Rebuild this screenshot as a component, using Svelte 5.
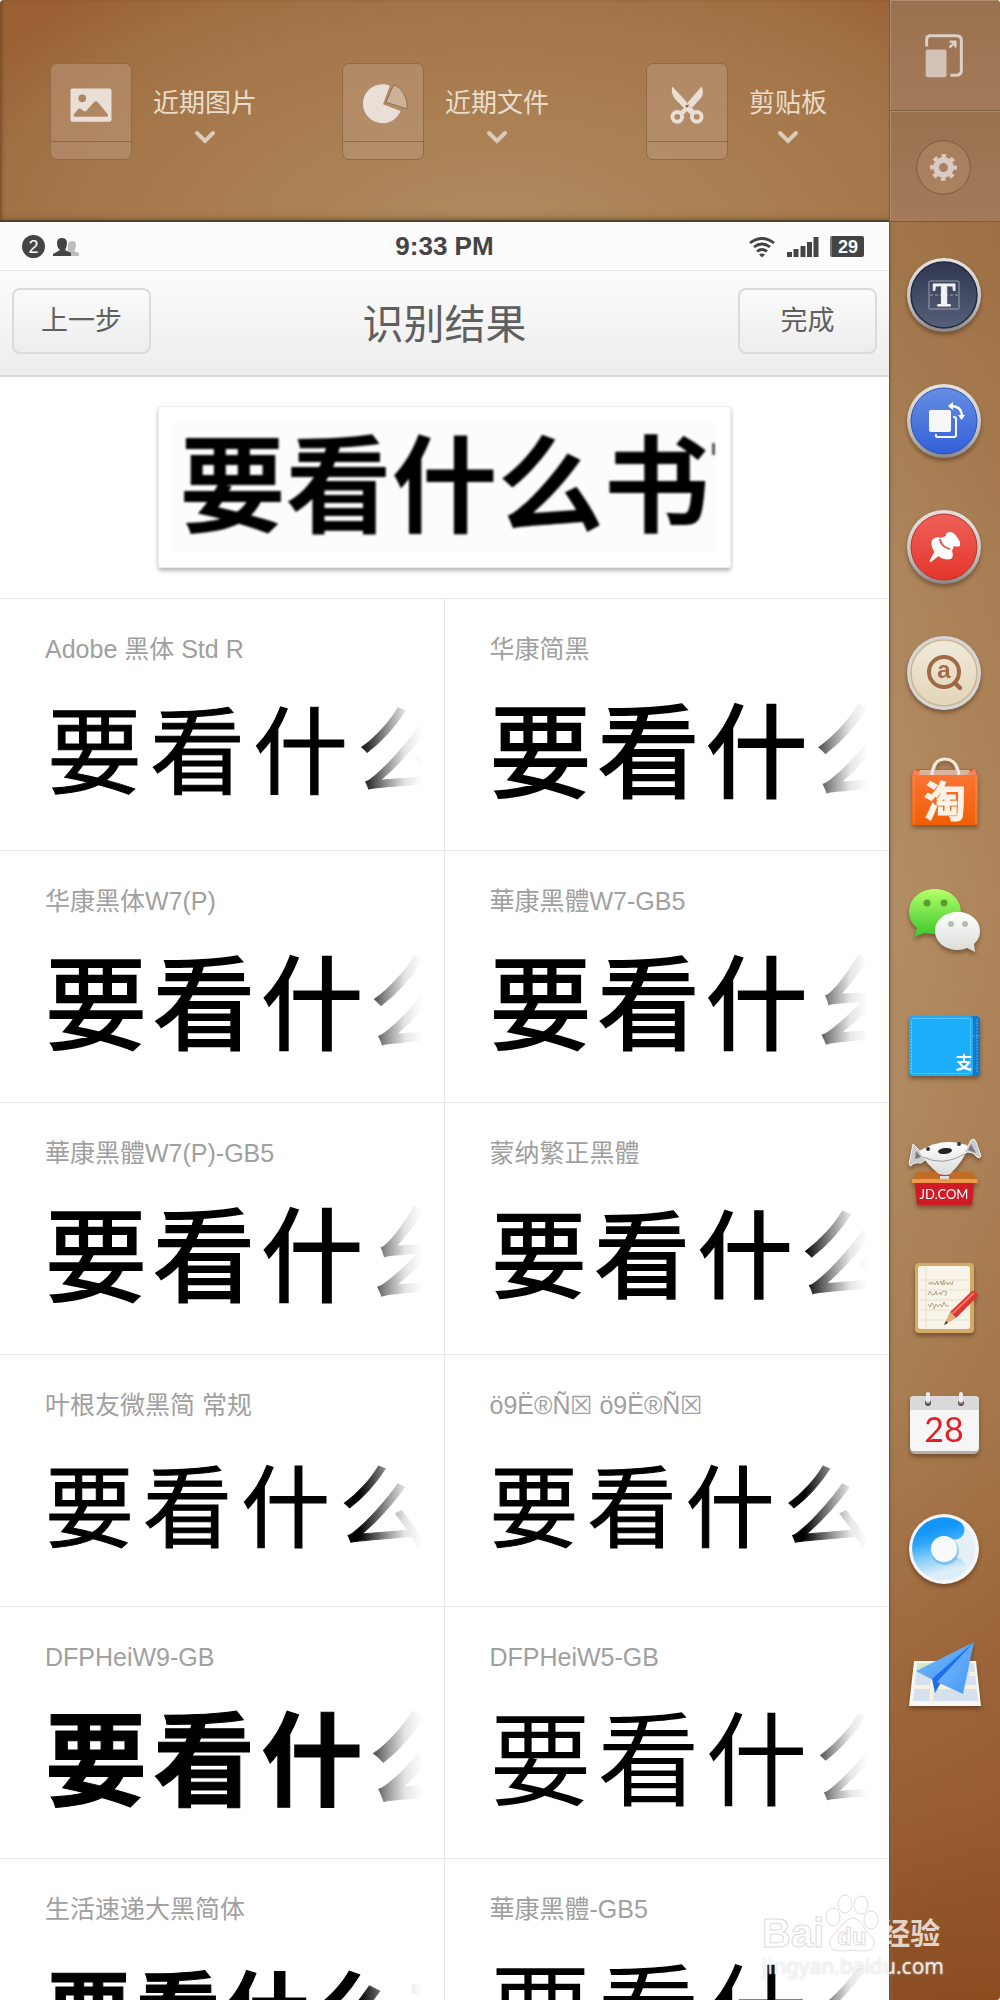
<script lang="ts">
	interface Sample {
		name: string;
		text: string;
		style: string;
	}

	const samples: Sample[] = [
		{ name: 'Adobe 黑体 Std R', text: '要看什么', style: 'medium w5' },
		{ name: '华康简黑', text: '要看什么', style: 'large w7' },
		{ name: '华康黑体W7(P)', text: '要看什么', style: 'large w7' },
		{ name: '華康黑體W7-GB5', text: '要看什幺', style: 'large w7' },
		{ name: '華康黑體W7(P)-GB5', text: '要看什幺', style: 'large w7' },
		{ name: '蒙纳繁正黑體', text: '要看什么', style: 'medium w7' },
		{ name: '叶根友微黑简 常规', text: '要看什么', style: 'small w5' },
		{ name: 'ö9Ë®Ñ☒ ö9Ë®Ñ☒', text: '要看什么', style: 'small w5' },
		{ name: 'DFPHeiW9-GB', text: '要看什么', style: 'large w9' },
		{ name: 'DFPHeiW5-GB', text: '要看什么', style: 'large w4' },
		{ name: '生活速递大黑简体', text: '要看什么书', style: 'tiny w9' },
		{ name: '華康黑體-GB5', text: '要看什么', style: 'large w4' }
	];

	let selected = $state('');
</script>

{#snippet chevron()}
	<svg class="chevron" viewBox="0 0 22 14" aria-hidden="true">
		<path d="M3 3l8 8 8-8" fill="none" stroke="#dccbba" stroke-width="4" stroke-linecap="round" />
	</svg>
{/snippet}

<div class="shell">
	<header class="tools">
		<button class="tool">
			<span class="card">
				<svg viewBox="0 0 82 97" aria-hidden="true">
					<path
						fill="#e9dfd6"
						fill-rule="evenodd"
						d="M22 25h38q2 0 2 2v30q0 2-2 2H22q-2 0-2-2V27q0-2 2-2zM32 31a4 4 0 1 0 0 8 4 4 0 0 0 0-8zM24 54h34q1 0 0-3L48 39q-2-2-4 0l-8 9q-2 1-4-1-3-3-5 0l-4 5z"
					/>
				</svg>
			</span>
			<span class="tool-label">近期图片{@render chevron()}</span>
		</button>
		<button class="tool">
			<span class="card">
				<svg viewBox="0 0 82 97" aria-hidden="true">
					<path fill="#e9dfd6" d="M41 41l7-19a20 20 0 1 0 11 26z" />
					<path fill="#cdb198" stroke="#8f6d4d" d="M44 39l8-18q14 6 14 25z" />
				</svg>
			</span>
			<span class="tool-label">近期文件{@render chevron()}</span>
		</button>
		<button class="tool">
			<span class="card">
				<svg viewBox="0 0 82 97" aria-hidden="true">
					<path fill="#e9dfd6" d="M26 23q-2 7 3 13l16 16 5-3zM56 23q3 7-1 12l-9 10-5-5zM40 43l-8 7 4 3 7-7z" />
					<circle cx="31" cy="54" r="5" fill="none" stroke="#e9dfd6" stroke-width="4" />
					<circle cx="51" cy="54" r="5" fill="none" stroke="#e9dfd6" stroke-width="4" />
					<circle cx="41" cy="43" r="1.5" fill="#8f6d4d" />
				</svg>
			</span>
			<span class="tool-label">剪贴板{@render chevron()}</span>
		</button>
	</header>

	<aside class="dock">
		<button class="corner" aria-label="缩放">
			<svg viewBox="0 0 111 110" aria-hidden="true">
				<path d="M37 46V39q0-4 4-4h26q5 0 5 5v30q0 5-5 5h-6" fill="none" stroke="#ddd0c6" stroke-width="3" />
				<rect x="36" y="49" width="21" height="28" rx="2" fill="#d3c3b7" />
				<path d="M60 41h6v6M66 41l-6 6" fill="none" stroke="#ddd0c6" stroke-width="2.4" />
			</svg>
		</button>
		<button class="corner" aria-label="设置">
			<svg viewBox="0 0 111 110" aria-hidden="true">
				<circle cx="54" cy="56" r="27" fill="#b58c6a" fill-opacity=".5" stroke="#7c5c41" />
				<circle cx="54" cy="56" r="7.5" fill="none" stroke="#d8cbc1" stroke-width="6" />
				<circle cx="54" cy="56" r="11.5" fill="none" stroke="#d8cbc1" stroke-width="4" stroke-dasharray="4.5 4.53" stroke-dashoffset="2.2" />
			</svg>
		</button>

		<nav class="apps" aria-label="应用">
			<svg class="defs" width="0" height="0" aria-hidden="true">
				<defs>
					<linearGradient id="rim" x2="0" y2="1"><stop stop-color="#e6e3df" /><stop offset=".6" stop-color="#c6c4c2" /><stop offset="1" stop-color="#8d8885" /></linearGradient>
					<linearGradient id="navy" x2="0" y2="1"><stop stop-color="#303851" /><stop offset="1" stop-color="#566078" /></linearGradient>
					<linearGradient id="blue" x2="0" y2="1"><stop stop-color="#668ee2" /><stop offset="1" stop-color="#3360d8" /></linearGradient>
					<linearGradient id="red" x2="0" y2="1"><stop stop-color="#ee6158" /><stop offset="1" stop-color="#e4352c" /></linearGradient>
					<linearGradient id="cream" x2="0" y2="1"><stop stop-color="#f0e9da" /><stop offset="1" stop-color="#e3d5b8" /></linearGradient>
					<linearGradient id="orange" x2="0" y2="1"><stop stop-color="#fb7434" /><stop offset="1" stop-color="#ef5f04" /></linearGradient>
					<linearGradient id="green" x2="0" y2="1"><stop stop-color="#b4ff6a" /><stop offset="1" stop-color="#3cc62c" /></linearGradient>
					<linearGradient id="silver" x2="0" y2="1"><stop stop-color="#ffffff" /><stop offset="1" stop-color="#d9dcd8" /></linearGradient>
					<linearGradient id="sky" x1=".6" y1="0" x2=".8" y2="1"><stop stop-color="#1296f8" /><stop offset=".25" stop-color="#2ea6fa" /><stop offset=".6" stop-color="#83cdf9" /><stop offset="1" stop-color="#dceef8" /></linearGradient>
					<linearGradient id="plane" y2="1"><stop stop-color="#79bdfb" /><stop offset="1" stop-color="#4596f5" /></linearGradient>
				</defs>
			</svg>

			<a class="app" href="#text" aria-label="文字">
				<svg viewBox="0 0 111 126">
					<circle cx="55" cy="63" r="37" fill="url(#rim)" />
					<circle cx="55" cy="63" r="33" fill="url(#navy)" stroke="#222a42" stroke-width="1.5" />
					<rect x="40" y="49" width="30" height="28" rx="1" fill="none" stroke="#9aa1b1" />
					<path d="M41 63h29" stroke="#9aa1b1" stroke-dasharray="3 2" />
					<text x="55" y="74" class="glyph-t">T</text>
				</svg>
			</a>
			<a class="app" href="#rotate" aria-label="旋转">
				<svg viewBox="0 0 111 126">
					<circle cx="55" cy="63" r="37" fill="url(#rim)" />
					<circle cx="55" cy="63" r="33" fill="url(#blue)" stroke="#2c50b8" />
					<rect x="40" y="52" width="22" height="22" rx="2" fill="#f7f7f7" />
					<path d="M47 76v2q0 1 2 1h16q2 0 2-2V61q0-2-2-2h-1" fill="none" stroke="#f4f6fc" stroke-width="2" />
					<path d="M62 48q10 0 11 9" fill="none" stroke="#fff" stroke-width="2.5" />
					<path d="M64 44v8l-5-4zM69 57h7l-3.5 5z" fill="#fff" />
				</svg>
			</a>
			<a class="app" href="#pin" aria-label="固定">
				<svg viewBox="0 0 111 126">
					<circle cx="55" cy="63" r="37" fill="url(#rim)" />
					<circle cx="55" cy="63" r="33" fill="url(#red)" stroke="#b8302b" />
					<path
						d="M58 49q5-3 10 4 4 5 3 9-3 1-6 0l-2 5q2 5-1 8-9 2-15-5-6-7-4-14 4-4 9-2l5-2q-1-2 1-3zM47 65l5 5-10 8q-2 0-1-2z"
						fill="#fff"
					/>
					<path d="M51 55q1 8 10 10" fill="none" stroke="#e9524a" stroke-width="2" />
				</svg>
			</a>
			<a class="app" href="#search" aria-label="搜索">
				<svg viewBox="0 0 111 126">
					<circle cx="55" cy="63" r="37" fill="#d7d5d5" />
					<circle cx="55" cy="63" r="33" fill="url(#cream)" stroke="#c9b88f" stroke-width="1.5" />
					<circle cx="55" cy="62" r="15" fill="none" stroke="#a06a46" stroke-width="4" />
					<path d="M66 73l5 5" stroke="#a06a46" stroke-width="4.5" stroke-linecap="round" />
					<text x="55" y="68" class="glyph-a">a</text>
				</svg>
			</a>
			<a class="app" href="#taobao" aria-label="淘宝">
				<svg viewBox="0 0 111 126">
					<path d="M25 33h61l2 7H23z" fill="#ea5420" />
					<path d="M31 34h49l3 5H28z" fill="#d9b59c" />
					<path d="M25 33l7 5-9 2zM86 33l-8 5 10 2z" fill="#fb8256" />
					<path d="M45 39q0-16 11-16t12 16" fill="none" stroke="#c9b5a3" stroke-width="2" />
					<rect x="23" y="39" width="66" height="50" fill="url(#orange)" />
					<path d="M43 39q1-16 13-16t14 16" fill="none" stroke="#f6e8d8" stroke-width="3" />
					<path d="M25 40v48M87 40v48" stroke="#ff9c66" stroke-opacity=".6" />
					<text x="56" y="81" class="glyph-tao">淘</text>
				</svg>
			</a>
			<a class="app" href="#wechat" aria-label="微信">
				<svg viewBox="0 0 111 126">
					<path d="M46 27c15 0 26 10 26 23S61 72 46 72q-6 0-10-1l-11 4 3-9q-8-6-8-16c0-13 11-23 26-23z" fill="url(#green)" />
					<circle cx="38" cy="41" r="3.5" fill="#579f28" />
					<circle cx="55" cy="41" r="3.5" fill="#579f28" />
					<path d="M69 50c12 0 22 8 22 19q0 8-6 13l1 8-8-4q-4 2-9 2c-13 0-23-8-23-19s10-19 23-19z" fill="url(#silver)" />
					<circle cx="62" cy="62" r="3" fill="#b5beb2" />
					<circle cx="76" cy="62" r="3" fill="#b5beb2" />
				</svg>
			</a>
			<a class="app" href="#alipay" aria-label="支付宝">
				<svg viewBox="0 0 111 126">
					<rect x="60" y="28" width="31" height="60" rx="4" fill="#1279c8" />
					<path d="M88 31v54M84 48h7" stroke="#57aee6" stroke-dasharray="2 1" fill="none" />
					<rect x="20" y="28" width="64" height="60" rx="3" fill="#1cadfb" />
					<rect x="22.5" y="30.5" width="59" height="55" rx="2" fill="none" stroke="#7bd0fb" stroke-dasharray="2 1" />
					<text x="75" y="81" class="glyph-zhi">支</text>
				</svg>
			</a>
			<a class="app" href="#jd" aria-label="京东">
				<svg viewBox="0 0 111 126">
					<path d="M28 58h55l6 9H23z" fill="#bf6c25" />
					<path d="M51 55h9v10h-9z" fill="#ddd" />
					<path d="M51 59h9v3h-9z" fill="#d8333a" />
					<path d="M30 37Q55 22 80 32q-6 16-19 28-4 2-11 0Q37 50 30 37z" fill="url(#silver)" />
					<path d="M30 36l6 10-4 3q-8-1-10 3-3 0-1-7l3-15zM79 32l3-6q4-2 5 2l5 14q-1 3-4 1-5-7-13-4z" fill="#c9cacb" stroke="#f2f2f2" />
					<path d="M27 37l5 6-6 2zM82 30l5 9-8-3z" fill="#777b7e" />
					<ellipse cx="56" cy="37" rx="7" ry="3" fill="#222" transform="rotate(-6 56 37)" />
					<circle cx="39" cy="35" r="2" fill="#333" />
					<circle cx="70" cy="30" r="2" fill="#333" />
					<path d="M34 43q20 10 42-3" fill="none" stroke="#888" stroke-width=".8" />
					<path d="M23 65h65l1 4H23z" fill="#ef9a4b" />
					<path d="M26 69h59l-2 22H28z" fill="#cf1b25" />
					<text x="55" y="85" class="glyph-jd">JD.COM</text>
				</svg>
			</a>
			<a class="app" href="#notes" aria-label="便签">
				<svg viewBox="0 0 111 126">
					<rect x="26" y="23" width="59" height="70" rx="4" fill="#d3ab69" />
					<rect x="29" y="26" width="52" height="63" rx="3" fill="#f8f4ea" />
					<path d="M30 40h50M30 50h50M30 60h50M30 70h50M30 80h50M37 27v61" stroke="#e6e0d2" fill="none" />
					<path d="M39 44l3-2v3l2-3 2 3 2-4 1 4 3-4 1 4 2-5v5l3-3 1 3 2-3 2 3 1-4M39 55l2-4 2 4 3-1 1-3 1 4 3-3 1 3 2-4 4 1-2 4M39 64l2 3 2-4 2 3v3l2-5 2 3 2-3 2 3 2-5 2 4h3" fill="none" stroke="#b5a58a" />
					<path d="M61 72l22-21q5 0 6 5L67 78z" fill="#d93630" />
					<path d="M63 74l22-21" stroke="#ef726a" stroke-width="2" />
					<path d="M61 72l6 6-12 7z" fill="#dfb07a" />
					<path d="M57 81l2 2-4 2z" fill="#3b3230" />
				</svg>
			</a>
			<a class="app" href="#calendar" aria-label="日历">
				<svg viewBox="0 0 111 126">
					<rect x="21" y="31" width="69" height="57" rx="5" fill="#b3b1b0" />
					<rect x="21" y="30" width="69" height="55" rx="4" fill="#f6f6f6" />
					<path d="M21 44V34q0-4 4-4h61q4 0 4 4v10z" fill="#d9d9d9" />
					<circle cx="39" cy="37" r="3" fill="#4d5264" />
					<circle cx="72" cy="37" r="3" fill="#4d5264" />
					<path d="M39 28v7M72 28v7" stroke="#ededed" stroke-width="4" stroke-linecap="round" />
					<path d="M37 37h4M70 37h4" stroke="#cf8378" />
					<text x="55" y="76" class="glyph-day">28</text>
				</svg>
			</a>
			<a class="app" href="#sync" aria-label="同步">
				<svg viewBox="0 0 111 126">
					<circle cx="55" cy="57" r="35" fill="#f5f6f7" />
					<circle cx="55" cy="57" r="31" fill="#e4eff6" />
					<path d="M66 38A22 22 0 1 0 67 75" fill="none" stroke="url(#sky)" stroke-width="19" stroke-linecap="round" />
					<circle cx="56" cy="59" r="14" fill="#268ad9" fill-opacity=".35" />
					<circle cx="55" cy="57" r="13" fill="#f8f9fa" />
				</svg>
			</a>
			<a class="app" href="#map" aria-label="地图">
				<svg viewBox="0 0 111 126">
					<path d="M25 43h62l5 45H20z" fill="#f7f7f5" />
					<path d="M28 45h57l4 38H24z" fill="#d5e1ef" />
					<path d="M28 45h16l-2 7-15 3z" fill="#d8e8c8" />
					<path d="M24 69h64M45 45l-3 39M80 56h7" stroke="#f6f2de" stroke-width="4" />
					<path d="M85 24L27 53l17 9z" fill="url(#plane)" />
					<path d="M85 24L43 61l3 14 5-9z" fill="#1f6fe8" />
					<path d="M85 24L48 64l26 12z" fill="url(#plane)" />
				</svg>
			</a>
		</nav>
	</aside>

	<main class="screen">
		<div class="status">
			<div class="status-side">
				<span class="badge">2</span>
				<svg width="28" height="20" viewBox="0 0 28 20" aria-hidden="true">
					<path fill="#bdbdbd" d="M19 4q4 0 4 4 0 4-2 6l5 2v3H15V7q1-3 4-3z" />
					<path fill="#444" d="M9 1q5 0 5 5 0 4-2 7l6 3v3H0v-2l7-4q-3-2-3-7 0-5 5-5z" />
				</svg>
			</div>
			<time>9:33 PM</time>
			<div class="status-side end">
				<svg width="28" height="22" viewBox="0 0 28 22" aria-hidden="true">
					<path d="M2 7q12-9 24 0M6 11q8-6 16 0M9 15.5q5-4 10 0" fill="none" stroke="#444" stroke-width="2.8" />
					<path d="M11 18.5q3-2 6 0l-3 3z" fill="#444" />
				</svg>
				<svg width="32" height="22" viewBox="0 0 32 22" aria-hidden="true">
					<path fill="#444" d="M0 16h5v5H0zM6.500 13h5v8h-5zM13.500 10h5v11h-5zM20 6h5v15h-5zM26.500 1h5v20h-5z" />
				</svg>
				<span class="battery">29</span>
			</div>
		</div>

		<div class="titlebar">
			<button class="action">上一步</button>
			<h1>识别结果</h1>
			<button class="action">完成</button>
		</div>

		<section class="preview">
			<div class="paper">
				<div class="scan">
					<span>要</span><span>看</span><span>什</span><span>么</span><span>书</span>
				</div>
			</div>
		</section>

		<div class="grid">
			{#each samples as sample}
				<button class="cell" aria-pressed={selected === sample.name} onclick={() => (selected = sample.name)}>
					<span class="name">{sample.name}</span>
					<span class="sample {sample.style}">
						{#each sample.text as char}<span>{char}</span>{/each}
					</span>
				</button>
			{/each}
		</div>
	</main>

	<div class="watermark">
		<div class="logo">
			<span class="outlined">Bai</span>
			<svg width="54" height="58" viewBox="0 0 54 58" aria-hidden="true">
				<g fill="#fff" fill-opacity=".8" stroke="#dcdcdc">
					<ellipse cx="8" cy="23" rx="7" ry="9" />
					<ellipse cx="20" cy="10" rx="7" ry="9" />
					<ellipse cx="36" cy="11" rx="7" ry="9" />
					<ellipse cx="46" cy="26" rx="7" ry="9" />
					<path d="M27 24q6 0 11 8t10 12q4 8-3 12-6 2-18 0-12 2-18 0-7-4-3-12 5-5 10-12t11-8z" />
				</g>
				<text x="27" y="51" class="glyph-du">du</text>
			</svg>
			<span class="jingyan">经验</span>
		</div>
		<span class="url">jingyan.baidu.com</span>
	</div>
</div>

<style>
	:global(body) {
		margin: 0;
		background: #fff;
	}

	.shell {
		position: relative;
		display: grid;
		grid-template-columns: minmax(0, 1fr) 111px;
		grid-template-rows: 222px minmax(0, 1fr);
		height: 100vh;
		overflow: hidden;
		border-radius: 4px;
		font-family: 'Liberation Sans', 'Noto Sans CJK SC', sans-serif;
		color: #444;
	}

	button {
		padding: 0;
		border: 0;
		background: none;
		font: inherit;
		color: inherit;
		cursor: pointer;
	}

	svg {
		display: block;
	}

	.tools {
		display: grid;
		grid-template-columns: 292fr 304fr 193fr;
		align-items: center;
		padding: 2px 50px 0;
		box-sizing: border-box;
		border-bottom: 2px solid #56402a;
		background: radial-gradient(ellipse 70% 150% at 56% 110%, #b08b60 0%, #a6794c 60%, #a07043 82%, #9a6034 100%);
		box-shadow: inset 3px 0 4px -2px #6b4423, inset 0 -6px 6px -4px #8a6640;
	}

	.tool {
		display: flex;
		gap: 21px;
		align-items: center;
		font-size: 26px;
		line-height: 36px;
		color: #e9dccb;
		white-space: nowrap;
	}

	.card {
		width: 82px;
		height: 97px;
		box-sizing: border-box;
		border: 1px solid #8f6a47;
		border-radius: 7px;
		background: linear-gradient(transparent 77px, #8f6a47 77px, #8f6a47 78px, transparent 78px), rgba(188, 152, 122, 0.55);
	}

	.card svg {
		width: 80px;
		height: 95px;
	}

	.tool-label {
		display: flex;
		flex-direction: column;
		align-items: center;
		gap: 9px;
		padding-top: 7px;
	}

	.chevron {
		width: 22px;
		height: 14px;
	}

	.dock {
		grid-row: 1 / 3;
		grid-column: 2;
		z-index: 1;
		display: flex;
		flex-direction: column;
		background: linear-gradient(to right, transparent, rgba(140, 72, 24, 0.14)),
			linear-gradient(#a17449 0%, #a1754a 12%, #ad865d 28%, #b38e65 45%, #b08960 56%, #a87e52 70%, #a27145 78%, #995f34 90%, #8b4d22 100%);
		box-shadow: inset 1px 0 1px #6f5135, inset 5px 0 5px -4px #8f6b46;
	}

	.corner {
		flex: none;
		height: 111px;
		box-sizing: border-box;
		border-bottom: 1px solid #7c5b3f;
		border-left: 1px solid #7c5b3f;
		background: linear-gradient(#99714f, #a37b5a);
		box-shadow: inset 1px 1px #b08d6f;
	}

	.corner svg {
		width: 110px;
		height: 109px;
	}

	.apps {
		display: flex;
		flex-direction: column;
		padding-top: 10px;
	}

	.defs {
		position: absolute;
	}

	.app svg {
		width: 111px;
		height: 126px;
		filter: drop-shadow(0 3px 2px rgba(60, 30, 10, 0.45));
	}

	text {
		text-anchor: middle;
	}

	.glyph-t {
		font: bold 34px 'Liberation Serif', serif;
		fill: #f2f3f5;
		stroke: #f2f3f5;
	}

	.glyph-a {
		font: bold 24px 'Liberation Sans', sans-serif;
		fill: #a06a46;
	}

	.glyph-tao {
		font: bold 42px 'Noto Sans CJK SC', sans-serif;
		fill: #fdf3e7;
		stroke: #fdf3e7;
	}

	.glyph-zhi {
		font: bold 17px 'Noto Sans CJK SC', sans-serif;
		fill: #fff;
	}

	.glyph-jd {
		font: 13px Lato, sans-serif;
		fill: #fff;
	}

	.glyph-day {
		font: 34px Lato, sans-serif;
		fill: #e41e26;
	}

	.glyph-du {
		font: bold 24px 'Liberation Sans', sans-serif;
		fill: #fff;
		stroke: #dcdcdc;
	}

	.screen {
		display: flex;
		flex-direction: column;
		min-width: 0;
		overflow: hidden;
		background: #fff;
	}

	.status {
		flex: none;
		display: grid;
		grid-template-columns: 1fr auto 1fr;
		align-items: center;
		height: 49px;
		padding: 1px 22px 0;
		box-sizing: border-box;
		border-bottom: 1px solid #e6e6e6;
		background: #fcfcfc;
	}

	time {
		font-size: 26px;
		font-weight: bold;
	}

	.status-side {
		display: flex;
		align-items: center;
		gap: 8px;
	}

	.end {
		justify-content: flex-end;
		gap: 11px;
		padding-right: 3px;
	}

	.badge {
		width: 23px;
		height: 23px;
		border-radius: 50%;
		background: #444;
		color: #fff;
		font-size: 18px;
		line-height: 24px;
		text-align: center;
	}

	.battery {
		width: 32px;
		height: 21px;
		border-left: 2px solid #777;
		border-radius: 2px;
		background: #444;
		color: #fff;
		font-size: 18px;
		font-weight: bold;
		line-height: 22px;
		text-align: center;
	}

	.titlebar {
		flex: none;
		display: flex;
		align-items: center;
		justify-content: space-between;
		height: 106px;
		padding: 0 12px 4px;
		box-sizing: border-box;
		border-bottom: 2px solid #dadada;
		background: linear-gradient(#fcfcfc, #ededed);
	}

	h1 {
		margin: 0;
		padding-top: 8px;
		font-size: 41px;
		font-weight: normal;
		line-height: 56px;
		color: #5f5f5f;
	}

	.action {
		width: 139px;
		height: 66px;
		box-sizing: border-box;
		border: 2px solid #dadbdd;
		border-radius: 8px;
		background: linear-gradient(#fbfbfb, #ededed);
		font-size: 27px;
		line-height: 38px;
		color: #606060;
	}

	.preview {
		flex: none;
		display: flex;
		justify-content: center;
		padding: 29px 0 30px;
		border-bottom: 1px solid #e8e8e8;
	}

	.paper {
		padding: 14px 15px;
		border: 1px solid #ececec;
		border-radius: 3px;
		box-shadow: 0 3px 4px rgba(0, 0, 0, 0.28);
	}

	.scan {
		position: relative;
		display: flex;
		align-items: center;
		justify-content: center;
		width: 541px;
		height: 132px;
		background: #fcfcfc;
		color: #000;
		font-size: 106px;
		font-weight: bold;
		line-height: 132px;
		filter: blur(1px);
	}

	/* edge of the next character, cut off by the crop */
	.scan::after {
		content: '';
		position: absolute;
		top: 22px;
		right: 0;
		width: 3px;
		height: 12px;
		background: #555;
	}

	.grid {
		display: grid;
		grid-template-columns: 1fr 1fr;
		grid-auto-rows: 252px;
	}

	.cell {
		display: flex;
		flex-direction: column;
		min-width: 0;
		padding: 33px 18px 0 45px;
		box-sizing: border-box;
		border-bottom: 1px solid #e8e8e8;
		text-align: left;
	}

	.cell:nth-child(odd) {
		border-right: 1px solid #e8e8e8;
	}

	.name {
		font-size: 25px;
		line-height: 34px;
		color: #a0a0a0;
	}

	.sample {
		display: flex;
		align-items: center;
		height: 150px;
		margin-top: 4px;
		overflow: hidden;
		color: #000;
		mask-image: linear-gradient(to right, #000 314px, rgba(0, 0, 0, 0.4) 343px, rgba(0, 0, 0, 0.1) 360px, transparent 378px);
	}

	.sample span {
		flex: none;
	}

	.large {
		gap: 6px;
		font-size: 102px;
	}

	.medium {
		gap: 8px;
		padding-left: 2px;
		font-size: 95px;
	}

	.small {
		gap: 9px;
		font-size: 89px;
	}

	.tiny {
		gap: 5px;
		padding-left: 2px;
		font-size: 84px;
	}

	.w5 {
		-webkit-text-stroke: 1px #000;
	}

	.w7 {
		-webkit-text-stroke: 2px #000;
	}

	.w9 {
		font-weight: bold;
		-webkit-text-stroke: 1px #000;
	}

	.watermark {
		position: absolute;
		right: 56px;
		bottom: 20px;
		z-index: 2;
		display: flex;
		flex-direction: column;
		color: rgba(255, 255, 255, 0.75);
	}

	.logo {
		display: flex;
		align-items: flex-end;
		gap: 1px;
		font-weight: bold;
	}

	.outlined {
		font-size: 40px;
		line-height: 38px;
		color: #fff;
		-webkit-text-stroke: 1px #dcdcdc;
	}

	.jingyan {
		font-size: 30px;
		line-height: 36px;
	}

	.url {
		font-family: 'Noto Sans', sans-serif;
		font-size: 21px;
		line-height: 28px;
		text-shadow: 0 0 2px #ccc;
	}
</style>
